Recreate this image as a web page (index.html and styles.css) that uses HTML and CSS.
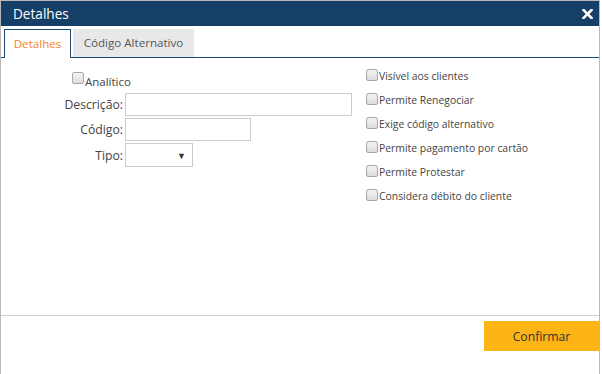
FILE: index.html
```html
<!DOCTYPE html>
<html lang="pt">
<head>
<meta charset="utf-8">
<title>Detalhes</title>
<link rel="stylesheet" href="styles.css">
</head>
<body>
<div class="window">
  <div class="titlebar">
    <span class="title">Detalhes</span>
    <svg class="close" width="11" height="10" viewBox="0 0 11 10"><path d="M1.5 1 L9.5 9 M9.5 1 L1.5 9" stroke="#fff" stroke-width="2.6" stroke-linecap="square"/></svg>
  </div>
  <div class="tabs">
    <div class="tab active">Detalhes</div>
    <div class="tab alt">Código Alternativo</div>
  </div>
  <div class="content">
    <div class="left">
      <label class="check analitico"><span class="box"></span>Analítico</label>
      <div class="grid">
        <span class="lbl">Descrição:</span><span class="input w-desc"></span>
        <span class="lbl">Código:</span><span class="input w-cod"></span>
        <span class="lbl">Tipo:</span><span class="input select"><span class="arrow">▼</span></span>
      </div>
    </div>
    <div class="right">
      <label class="check"><span class="box"></span>Visível aos clientes</label>
      <label class="check"><span class="box"></span>Permite Renegociar</label>
      <label class="check"><span class="box"></span>Exige código alternativo</label>
      <label class="check"><span class="box"></span>Permite pagamento por cartão</label>
      <label class="check"><span class="box"></span>Permite Protestar</label>
      <label class="check"><span class="box"></span>Considera débito do cliente</label>
    </div>
  </div>
  <div class="footer">
    <button class="confirm">Confirmar</button>
  </div>
</div>
</body>
</html>
```
FILE: styles.css
```css
html, body { margin: 0; padding: 0; background: #fff; }
body { font-family: "Open Sans", "Noto Sans", sans-serif; color: #333; }
.window {
  width: 598px;
  height: 373px;
  border: 1px solid #b8b8b8;
  border-bottom: none;
  display: flex;
  flex-direction: column;
  background: #fff;
}
.titlebar {
  height: 25px;
  background: #153f66;
  display: flex;
  align-items: center;
  justify-content: space-between;
  padding: 0 6px 0 12px;
}
.title { color: #fff; font-size: 13.6px; line-height: 25px; }
.close { margin-top: 1px; }
.tabs {
  margin-top: 3px;
  padding-left: 3px;
  display: flex;
  gap: 2px;
  border-bottom: 1px solid #1d4a70;
  height: 28px;
}
.tab {
  height: 28px;
  box-sizing: border-box;
  font-size: 11.6px;
  line-height: 28px;
  background: #e8e8e8;
  color: #555;
  text-align: center;
}
.tab.alt { width: 121px; }
.tab.active {
  width: 67px;
  background: #fff;
  color: #f7862a;
  border: 1px solid #1d4a70;
  border-bottom: none;
  height: 29px;
  margin-bottom: -1px;
  line-height: 27px;
}
.content {
  flex: 1;
  display: flex;
  border-bottom: 1px solid #cfcfcf;
}
.left { width: 305px; padding-left: 60px; padding-top: 14px; }
.right { padding-top: 6px; display: flex; flex-direction: column; }
.check {
  display: flex;
  align-items: center;
  font-size: 10.4px;
  color: #444;
  height: 24px;
}
.box {
  width: 10px;
  height: 10px;
  border: 1px solid #a8a8a8;
  border-radius: 2px;
  background: linear-gradient(#f4f4f4, #dcdcdc);
  margin-right: 1px;
  margin-top: -2px;
}
.analitico { padding-left: 11px; height: 18px; margin-bottom: 3px; font-size: 11.5px; }
.analitico .box { margin-right: 1px; margin-top: -6px; }
.grid {
  display: grid;
  grid-template-columns: 62px auto;
  column-gap: 2px;
  row-gap: 2px;
  align-items: center;
  justify-items: start;
}
.lbl { justify-self: end; font-size: 12.2px; color: #444; }
.input {
  display: block;
  box-sizing: border-box;
  border: 1px solid #cccccc;
  background: #fff;
}
.w-desc { width: 227px; height: 23px; }
.w-cod { width: 126px; height: 23px; }
.select { width: 68px; height: 24px; position: relative; }
.arrow { position: absolute; right: 6px; top: 5px; font-size: 9px; color: #333; }
.footer {
  height: 58px;
  display: flex;
  justify-content: flex-end;
  align-items: flex-start;
  padding-top: 5px;
  box-sizing: border-box;
}
.confirm {
  width: 115px;
  height: 30px;
  border: none;
  background: #fdb515;
  color: #333;
  font-family: "Open Sans", "Noto Sans", sans-serif;
  font-size: 12.2px;
  padding: 0;
}
```
